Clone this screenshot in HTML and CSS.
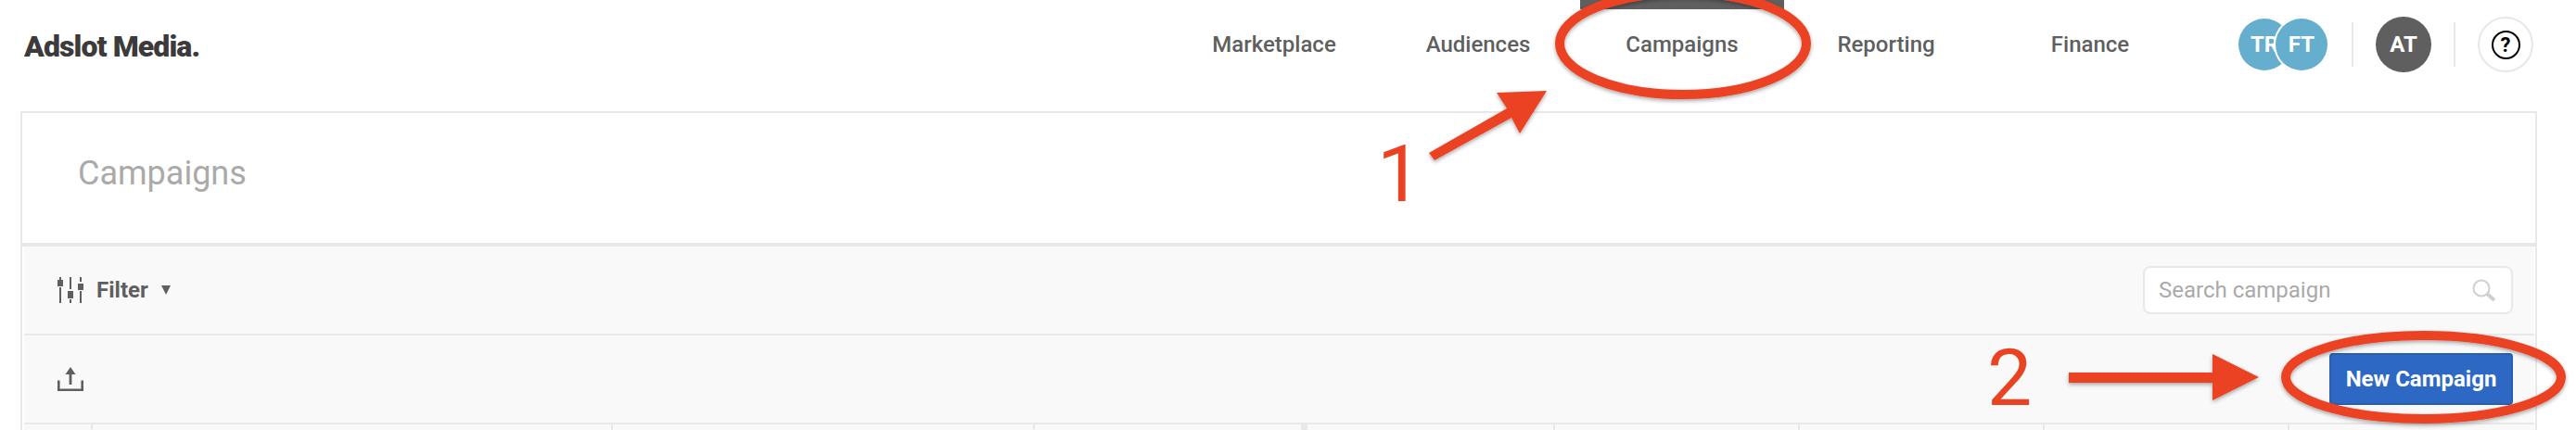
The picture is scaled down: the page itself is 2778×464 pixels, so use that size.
FILE: index.html
```html
<!DOCTYPE html>
<html lang="en">
<head>
<meta charset="utf-8">
<title>Campaigns</title>
<link rel="stylesheet" href="styles.css">
</head>
<body>
<div class="page">
  <header class="topbar">
    <div class="logo">Adslot Media.</div>
    <nav class="nav">
      <a class="nav-item">Marketplace</a>
      <a class="nav-item">Audiences</a>
      <a class="nav-item active">Campaigns</a>
      <a class="nav-item">Reporting</a>
      <a class="nav-item">Finance</a>
    </nav>
    <div class="users">
      <div class="avatar-group">
        <span class="avatar blue">TR</span>
        <span class="avatar blue front">FT</span>
      </div>
      <span class="divider"></span>
      <span class="avatar dark">AT</span>
      <span class="divider"></span>
      <span class="help"><span class="help-mark">?</span></span>
    </div>
  </header>
  <main class="card">
    <div class="title-row"><h1 class="title">Campaigns</h1></div>
    <div class="panel">
      <div class="row">
        <div class="filter">
          <svg class="icon-filter" width="28" height="28" viewBox="0 0 28 28" fill="#5f5f5f">
            <rect x="2" y="0" width="2" height="3"/><rect x="0" y="3" width="6" height="7"/><rect x="2" y="11" width="2" height="17"/>
            <rect x="13" y="0" width="2" height="13"/><rect x="11" y="15" width="6" height="8"/><rect x="13" y="24" width="2" height="4"/>
            <rect x="24" y="0" width="2" height="5"/><rect x="22" y="7" width="6" height="7"/><rect x="24" y="15" width="2" height="13"/>
          </svg>
          <span class="filter-label">Filter</span>
          <span class="caret"></span>
        </div>
        <div class="search">
          <span class="search-text">Search campaign</span>
          <svg class="icon-search" width="26" height="24" viewBox="0 0 26 24" fill="none" stroke="#cfcfcf">
            <circle cx="10" cy="10" r="8.5" stroke-width="2"/>
            <path d="M16 16l8 7" stroke-width="4"/>
          </svg>
        </div>
      </div>
      <div class="row">
        <svg class="icon-upload" width="28" height="26" viewBox="0 0 28 26" fill="none" stroke="#5f5f5f">
          <path d="M1.3 14.5V24.7H26.7V14.5" stroke-width="2.6"/>
          <path d="M14 19V7" stroke-width="2.8"/>
          <path d="M14 0l5.5 8h-11z" fill="#5f5f5f" stroke="none"/>
        </svg>
        <button class="primary">New Campaign</button>
      </div>
      <div class="table-head">
        <div class="col-group group-left">
          <span class="cell"></span><span class="cell"></span><span class="cell"></span><span class="cell"></span>
        </div>
        <div class="col-group group-right">
          <span class="cell"></span><span class="cell"></span><span class="cell"></span><span class="cell"></span><span class="cell"></span>
        </div>
      </div>
    </div>
  </main>
  <svg class="annotations" width="2778" height="464" viewBox="0 0 2778 464">
    <defs>
      <filter id="soft" x="-5%" y="-5%" width="110%" height="115%">
        <feDropShadow dx="0" dy="2" stdDeviation="2" flood-color="#000" flood-opacity="0.35"/>
      </filter>
    </defs>
    <g filter="url(#soft)" fill="#ea4324">
      <ellipse cx="1815" cy="47" rx="133" ry="55" fill="none" stroke="#ea4324" stroke-width="10"/>
      <polygon points="1541,165 1547,173 1630,127 1639,144 1668,98 1614,100 1625,117"/>
      <ellipse cx="2613.5" cy="407" rx="148.5" ry="45" fill="none" stroke="#ea4324" stroke-width="10"/>
      <polygon points="2231,402 2386,402 2386,382 2436,407 2386,432 2386,413 2231,413"/>
    </g>
  </svg>
  <span class="step step-one">1</span>
  <span class="step step-two">2</span>
</div>
</body>
</html>
```
FILE: styles.css
```css
* { box-sizing: border-box; }
html, body { margin: 0; padding: 0; background: #fff; }
body { font-family: Roboto, "Liberation Sans", sans-serif; }
.page { position: relative; width: 2778px; height: 464px; overflow: hidden; }

.topbar { display: flex; align-items: center; height: 96px; padding: 0 46px 0 26px; margin-bottom: 24px; }
.logo { font-size: 32px; font-weight: 900; letter-spacing: -0.9px; color: #3c3a3a; padding-top: 4px; }
.nav { display: flex; margin-left: auto; height: 100%; }
.nav-item { position: relative; display: flex; align-items: center; justify-content: center; width: 220px; font-size: 24px; font-weight: 500; color: #5f5f5f; }
.nav-item.active::before { content: ""; position: absolute; top: 0; left: 0; right: 0; height: 10px; background: #5f5f5f; }

.users { display: flex; align-items: center; margin-left: 50px; }
.avatar-group { display: flex; align-items: center; }
.avatar { display: flex; align-items: center; justify-content: center; border-radius: 50%; color: #fff; font-size: 24px; font-weight: 700; flex: none; }
.avatar.blue { width: 56px; height: 56px; background: #66aecd; overflow: hidden; }
.avatar.front { margin-left: -16px; box-shadow: 0 0 0 2px #fff; position: relative; }
.avatar.dark { width: 60px; height: 60px; background: #5f5f5f; }
.divider { width: 2px; height: 48px; background: #e8e8e8; margin: 0 24px; }
.avatar-group + .divider { margin-left: 26px; }
.help { display: flex; align-items: center; justify-content: center; width: 60px; height: 60px; border: 2px solid #e8e8e8; border-radius: 50%; }
.help-mark { display: flex; align-items: center; justify-content: center; width: 31px; height: 31px; border: 2px solid #000; border-radius: 50%; font-size: 22px; font-weight: 700; color: #000; }

.card { margin: 0 42px 0 22px; height: 344px; border: 2px solid #e8e8e8; border-bottom: 0; }
.title-row { display: flex; align-items: center; height: 144px; padding: 0 0 11px 60px; border-bottom: 4px solid #e8e8e8; }
.title { margin: 0; font-size: 36px; font-weight: 400; color: #aaa; }
.panel { padding: 0 1px 0 2px; }
.row { display: flex; align-items: center; justify-content: space-between; height: 96px; padding: 0 23px 0 36px; background: #f9f9f9; border-bottom: 2px solid #e8e8e8; }
.filter { display: flex; align-items: center; }
.icon-filter { margin-right: 14px; }
.filter-label { font-size: 24px; font-weight: 700; color: #5f5f5f; }
.caret { width: 0; height: 0; margin-left: 14px; border-left: 5.5px solid transparent; border-right: 5.5px solid transparent; border-top: 10px solid #5f5f5f; }
.search { display: flex; align-items: center; justify-content: space-between; width: 399px; height: 52px; padding: 0 16px 0 15px; background: #fff; border: 2px solid #e8e8e8; border-radius: 8px; }
.search-text { font-size: 24px; color: #aaa; }
.primary { width: 198px; height: 56px; padding: 0; background: #2d69c4; border: 2px solid #2a5fae; border-radius: 4px; color: #fff; font-family: inherit; font-size: 24px; font-weight: 700; }
.table-head { display: flex; height: 20px; background: #f9f9f9; }
.col-group { display: flex; }
.group-left { width: 1377px; }
.group-right { flex: 1; border-left: 7px solid #e8e8e8; }
.cell { display: block; border-left: 2px solid #e8e8e8; flex: 0 0 auto; }
.cell:first-child { border-left: 0; }
.group-left .cell:nth-child(1) { width: 72px; }
.group-left .cell:nth-child(2) { width: 561px; }
.group-left .cell:nth-child(3) { width: 455px; }
.group-left .cell:nth-child(4) { width: 289px; }
.group-right .cell { width: 264px; }
.group-right .cell:nth-child(1) { width: 265px; }

.annotations { position: absolute; left: 0; top: 0; pointer-events: none; }
.step { position: absolute; font-family: Roboto, sans-serif; font-weight: 400; font-size: 86px; line-height: 86px; color: #ea4324; }
.step-one { left: 1485px; top: 145px; }
.step-two { left: 2143px; top: 365px; }
```
